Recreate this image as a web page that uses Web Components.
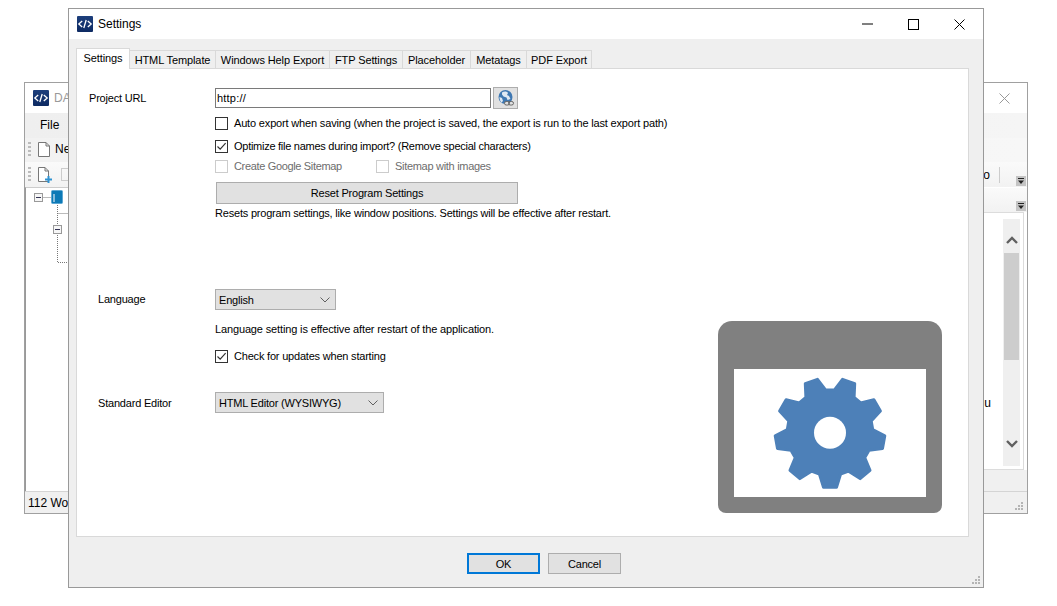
<!DOCTYPE html>
<html><head><meta charset="utf-8"><title>Settings</title>
<style>
html,body{margin:0;padding:0;background:#fff}
body{width:1057px;height:606px;overflow:hidden;position:relative;font:11px "Liberation Sans",Arial,sans-serif;color:#000}
</style></head><body>
<back-window></back-window>
<settings-dialog></settings-dialog>
<script>
function def(name, css, html, extra){
  const T=document.createElement('template');
  T.innerHTML='<style>'+css+'</style>'+html;
  customElements.define(name, class extends HTMLElement{
    constructor(){super();this.attachShadow({mode:'open'}).appendChild(T.content.cloneNode(true));}
    connectedCallback(){ if(extra) extra(this); }
  });
}
const LOGO='<svg width="16" height="16" viewBox="0 0 16 16"><defs><linearGradient id="lg" x1="0" y1="0" x2="0" y2="1"><stop offset="0" stop-color="#1d3f7c"/><stop offset="1" stop-color="#0d2a62"/></linearGradient></defs><rect width="16" height="16" rx="1" fill="url(#lg)"/><path d="M5.2 5 1.8 8l3.4 3M10.8 5l3.4 3-3.4 3M9.2 4 6.8 12" fill="none" stroke="#fff" stroke-width="1.3"/></svg>';

def('win-logo',':host{display:block;width:16px;height:16px;flex:none;line-height:0}',LOGO);

def('win-check',`:host{display:flex;align-items:center;height:14px;font:inherit;white-space:nowrap}
 .b{width:11px;height:11px;border:1px solid #333;background:#fff;flex:none;margin-right:6px;line-height:0}
 :host([disabled]) .b{border-color:#ccc}:host([disabled]){color:#6d6d6d}
 svg{display:none}:host([checked]) svg{display:block}`,
 '<span class="b"><svg width="11" height="11" viewBox="0 0 11 11"><path d="M1.5 5.5 4.2 8.2 9.6 2.2" fill="none" stroke="#333" stroke-width="1.2"/></svg></span><slot></slot>');

def('win-button',`:host{display:flex;align-items:center;justify-content:center;box-sizing:border-box;background:#e1e1e1;border:1px solid #adadad;font:inherit}
 :host([primary]){border:2px solid #0078d7}`,'<slot></slot>');

def('win-select',`:host{display:flex;align-items:center;justify-content:space-between;box-sizing:border-box;height:21px;background:#e1e1e1;border:1px solid #adadad;padding:0 5px 0 3px;font:inherit}
 svg{flex:none}`,'<slot></slot><svg width="10" height="6" viewBox="0 0 10 6"><path d="M.5 .5 5 5 9.5 .5" fill="none" stroke="#606060"/></svg>');

def('win-tab',`:host{display:flex;align-items:center;justify-content:center;box-sizing:border-box;height:18px;margin-top:2px;background:#efefef;border:1px solid #d9d9d9;border-left:0;border-bottom:0;font:inherit;letter-spacing:-.1px}
 :host([active]){height:21px;margin-top:0;margin-bottom:-1px;background:#fff;border-left:1px solid #d9d9d9;position:relative;z-index:1;padding:0 0 2px}`,'<slot></slot>');

def('settings-art',`:host{display:block;width:224px;height:192px;line-height:0}`,
 '<svg width="224" height="192" viewBox="0 0 224 192"><path d="M14 0H210A14 14 0 0 1 224 14V184A8 8 0 0 1 216 192H8A8 8 0 0 1 0 184V14A14 14 0 0 1 14 0Z" fill="#808080"/><rect x="16" y="48" width="192" height="128" fill="#fff"/><path id="g" fill="#4d80b8" stroke="#4d80b8" stroke-width="3" stroke-linejoin="round"/></svg>',
 el=>{
   const cx=112,cy=111.7,p=[];
   for(let i=0;i<9;i++){
     const a=Math.PI/2+i*2*Math.PI/9, ux=Math.cos(a),uy=Math.sin(a),vx=-uy,vy=ux;
     const pt=(r,w)=>(cx+ux*r+vx*w).toFixed(1)+' '+(cy+uy*r+vy*w).toFixed(1);
     p.push(pt(41.5,-10.5),pt(54.5,-6.5),pt(54.5,6.5),pt(41.5,10.5));
   }
   el.shadowRoot.getElementById('g').setAttribute('d','M'+p.join('L')+'Z');
   const svg=el.shadowRoot.querySelector('svg');
   const c=document.createElementNS('http://www.w3.org/2000/svg','circle');
   c.setAttribute('cx',cx);c.setAttribute('cy',cy);c.setAttribute('r',16);c.setAttribute('fill','#fff');
   svg.appendChild(c);
 });

def('win-grip',`:host{display:block;width:9px;height:9px;line-height:0}`,
 '<svg width="9" height="9" viewBox="0 0 9 9" fill="#b4b4b4"><rect x="6" y="0" width="2" height="2"/><rect x="3" y="3" width="2" height="2"/><rect x="6" y="3" width="2" height="2"/><rect x="0" y="6" width="2" height="2"/><rect x="3" y="6" width="2" height="2"/><rect x="6" y="6" width="2" height="2"/></svg>');

def('win-dropbtn',`:host{display:block;width:10px;height:10px;line-height:0}`,
 '<svg width="10" height="10" viewBox="0 0 10 10"><rect width="10" height="10" fill="#c4c4c4"/><rect x="2" y="2" width="6" height="1" fill="#222"/><path d="M2 4.5h6L5 8Z" fill="#222"/></svg>');

def('back-window',`:host{position:absolute;left:24px;top:82px;width:1004px;height:432px;box-sizing:border-box;border:1px solid #a0a0a0;background:#fff;display:flex;flex-direction:column;font:12px "Liberation Sans",Arial,sans-serif}
 .title{height:30px;flex:none;display:flex;align-items:center;padding:0 17px 0 8px;gap:5px;color:#999}
 .title span{font-size:12px}.title svg{margin-left:auto}
 .menu{height:25px;flex:none;display:flex;align-items:center;padding:0 0 2px 15px;box-sizing:border-box;background:linear-gradient(90deg,#efefef,#f5f5f5)}
 .tb{height:24px;flex:none;display:flex;align-items:center;background:linear-gradient(90deg,#f2f2f2,#f7f7f7);padding:0 0 2px 3px;box-sizing:border-box}
 .tb2{height:25px;padding-bottom:0;background:linear-gradient(#fafafa,#f2f2f2)}
 .dots{width:3px;height:15px;margin-right:6px;background:repeating-linear-gradient(#bbb 0 2px,transparent 2px 4px)}
 .main{flex:1;display:flex;min-height:0}
 .tree{width:120px;flex:none;border-left:1px solid #999;border-top:1px solid #ccc;line-height:0}
 .pane{flex:1;display:flex;flex-direction:column;align-items:stretch;min-width:0}
 .rt{height:25px;flex:none;display:flex;justify-content:flex-end;align-items:flex-end;padding:0 1px 1px 0;background:linear-gradient(#fafafa,#f2f2f2)}
 .box{flex:1;border:1px solid #dcdcdc;margin-right:3px;display:flex;background:#fff;padding:6px 3px 3px 0}
 .txt{flex:1;display:flex;justify-content:flex-end;align-items:flex-end;padding:0 12px 56px 0;font-size:12px}
 .sb{width:17px;flex:none;background:#efefef;display:flex;flex-direction:column;align-items:center;padding-top:17px;box-sizing:border-box}
 .thumb{width:15px;height:107px;background:#cdcdcd;margin-top:9px}
 .sb svg:last-child{margin-top:auto;margin-bottom:18px}
 .foot{height:22px;flex:none;background:#f0f0f0;border-top:1px solid #d4d4d4;display:flex;align-items:center;padding:1px 3px 0 3px;box-sizing:border-box;font-size:12px}
 .foot win-grip{margin-left:auto;margin-top:7px}
 .gap{height:21px;flex:none;background:#f0f0f0}`,
 `<div class="title"><win-logo></win-logo><span>DA</span><svg width="11" height="11" viewBox="0 0 11 11"><path d="M.5 .5l10 10M10.5 .5l-10 10" stroke="#999" fill="none"/></svg></div>
 <div class="menu">File</div>
 <div class="tb"><span class="dots"></span><svg width="14" height="15" viewBox="0 0 14 15" style="margin-right:4px"><path d="M1.5 .5H9L12.500 4V14.500H1.500Z M9 .5V4H12.500" fill="#fff" stroke="#777"/></svg><span>Ne</span></div>
 <div class="tb tb2"><span class="dots"></span><svg width="16" height="16" viewBox="0 0 16 16"><path d="M1.500 .5H8L11.500 4V14.500H1.500Z M8 .5V4H11.500" fill="#fff" stroke="#777"/><path d="M8 12.500h7M11.500 9v7" stroke="#2f93d2" stroke-width="2"/></svg><svg width="8" height="13" style="margin-left:8px"><rect x=".5" y=".5" width="12" height="12" fill="none" stroke="#ccc"/></svg>
   <span style="margin-left:auto;padding-right:27px;display:flex;align-items:center;gap:9px">o<i style="width:1px;height:16px;background:#ccc"></i></span></div>
 <div class="main">
  <div class="tree"><svg width="60" height="80" viewBox="0 0 60 80">
    <g fill="none" stroke="#777" stroke-dasharray="1 1">
      <path d="M12.500 9.500H25M31.500 17V74.500H44M31.500 25.500H44M31.500 42H36"/></g>
    <rect x="8.500" y="5.500" width="8" height="8" fill="#f6f6f6" stroke="#999"/><path d="M10 9.500h5" stroke="#335"/>
    <rect x="27.500" y="37.500" width="8" height="8" fill="#f6f6f6" stroke="#999"/><path d="M29 41.500h5" stroke="#335"/>
    <rect x="25.500" y="2.500" width="11" height="13" rx="1" fill="#0c79b6" stroke="#5da7d2"/><path d="M28 6v8" stroke="#fff"/>
  </svg></div>
  <div class="pane">
    <div class="rt" style="height:1px;padding:0;background:none;position:relative"><win-dropbtn style="position:absolute;right:1px;top:-11px"></win-dropbtn></div>
    <div class="rt" style="height:23px"><win-dropbtn></win-dropbtn></div>
    <div class="box"><div class="txt">u</div><div class="sb">
      <svg width="12" height="8" viewBox="0 0 12 8"><path d="M1 7 6 2l5 5" fill="none" stroke="#606060" stroke-width="2.400"/></svg>
      <div class="thumb"></div>
      <svg width="12" height="8" viewBox="0 0 12 8"><path d="M1 1l5 5 5-5" fill="none" stroke="#606060" stroke-width="2.400"/></svg>
    </div></div>
    <div class="gap"></div>
  </div>
 </div>
 <div class="foot">112 Wo<win-grip></win-grip></div>`);

def('settings-dialog',`:host{position:absolute;left:68px;top:8px;width:916px;height:580px;box-sizing:border-box;border:1px solid #999;background:#efefef;display:flex;flex-direction:column;font:11px "Liberation Sans",Arial,sans-serif;letter-spacing:-.2px}
 .title{height:30px;flex:none;background:#fff;display:flex;align-items:center;padding:0 18px 0 8px;letter-spacing:0}
 .title span{font-size:12px;margin-left:5px}
 .ctl{margin-left:auto;display:flex;align-items:center;gap:35px}
 .tabs{display:flex;margin:9px 0 0 7px;flex:none;height:20px}
 .panel{margin:0 14px 0 7px;flex:none;height:469px;box-sizing:border-box;background:#fff;border:1px solid #d9d9d9;position:relative}
 .row{display:grid;grid-template-columns:138px auto;justify-content:start;align-items:center}
 .lab{padding-left:12px}.lab2{padding-left:21px}
 .url{display:flex;gap:2px;align-items:center}
 .in{width:276px;height:20px;box-sizing:border-box;border:1px solid #7a7a7a;padding-left:1px;display:flex;align-items:center;background:#fff;letter-spacing:.2px}
 .two{display:flex}
 .foot{flex:1;display:flex;justify-content:flex-start;align-items:flex-start;gap:8px;padding:16px 0 0 398px;position:relative}
 win-button.f{width:73px;height:21px}
 win-grip{position:absolute;right:2px;bottom:2px}
 settings-art{position:absolute;right:26px;bottom:23px}`,
 `<div class="title"><win-logo></win-logo><span>Settings</span><div class="ctl">
   <svg width="11" height="2" viewBox="0 0 11 2"><path d="M0 1h11" stroke="#000"/></svg>
   <svg width="11" height="11" viewBox="0 0 11 11"><rect x=".5" y=".5" width="10" height="10" fill="none" stroke="#000"/></svg>
   <svg width="11" height="11" viewBox="0 0 11 11"><path d="M.5 .5l10 10M10.500 .5l-10 10" stroke="#000" fill="none"/></svg></div></div>
 <div class="tabs">
  <win-tab active style="width:54px">Settings</win-tab><win-tab style="width:86px">HTML Template</win-tab><win-tab style="width:114px">Windows Help Export</win-tab><win-tab style="width:73px">FTP Settings</win-tab><win-tab style="width:68px">Placeholder</win-tab><win-tab style="width:56px">Metatags</win-tab><win-tab style="width:65px">PDF Export</win-tab>
 </div>
 <div class="panel">
  <div class="row" style="margin-top:18px"><span class="lab">Project URL</span><div class="url"><div class="in">http://</div>
    <win-button style="width:25px;height:22px"><svg width="18" height="18" viewBox="0 0 18 18"><circle cx="8.500" cy="8" r="7" fill="#3f78b2"/><path d="M5 3.500c2-1.500 5-1.500 6 .5l-1 2 2 1 1.500 3-3 1-1-2.500-3-1-1.500-2Z M2.500 8l2.500 1 1 3-1.500 1.500C3 12 2.500 10 2.500 8Z" fill="#dfe9f3"/><rect x="7.500" y="12.500" width="5" height="3.500" rx="1.700" fill="#e1e1e1" stroke="#666"/><rect x="11.500" y="12.500" width="5" height="3.500" rx="1.700" fill="none" stroke="#666"/></svg></win-button></div></div>
  <div class="row" style="margin-top:7px"><span></span><win-check style="letter-spacing:-.165px">Auto export when saving (when the project is saved, the export is run to the last export path)</win-check></div>
  <div class="row" style="margin-top:9px"><span></span><win-check checked style="letter-spacing:-.265px">Optimize file names during import? (Remove special characters)</win-check></div>
  <div class="row" style="margin-top:6px"><span></span><div class="two"><win-check disabled style="width:161px;letter-spacing:-.34px">Create Google Sitemap</win-check><win-check disabled style="letter-spacing:-.3px">Sitemap with images</win-check></div></div>
  <div class="row" style="margin-top:9px"><span></span><win-button style="width:302px;height:22px;margin-left:1px">Reset Program Settings</win-button></div>
  <div class="row" style="margin-top:3px"><span></span><span>Resets program settings, like window positions. Settings will be effective after restart.</span></div>
  <div class="row" style="margin-top:69px"><span class="lab2">Language</span><win-select style="width:121px;margin-top:1px">English</win-select></div>
  <div class="row" style="margin-top:13px"><span></span><span style="letter-spacing:-.14px">Language setting is effective after restart of the application.</span></div>
  <div class="row" style="margin-top:14px"><span></span><win-check checked>Check for updates when starting</win-check></div>
  <div class="row" style="margin-top:29px"><span class="lab2">Standard Editor</span><win-select style="width:169px">HTML Editor (WYSIWYG)</win-select></div>
  <settings-art></settings-art>
 </div>
 <div class="foot"><win-button primary class="f">OK</win-button><win-button class="f">Cancel</win-button><win-grip></win-grip></div>`);
</script>
</body></html>
